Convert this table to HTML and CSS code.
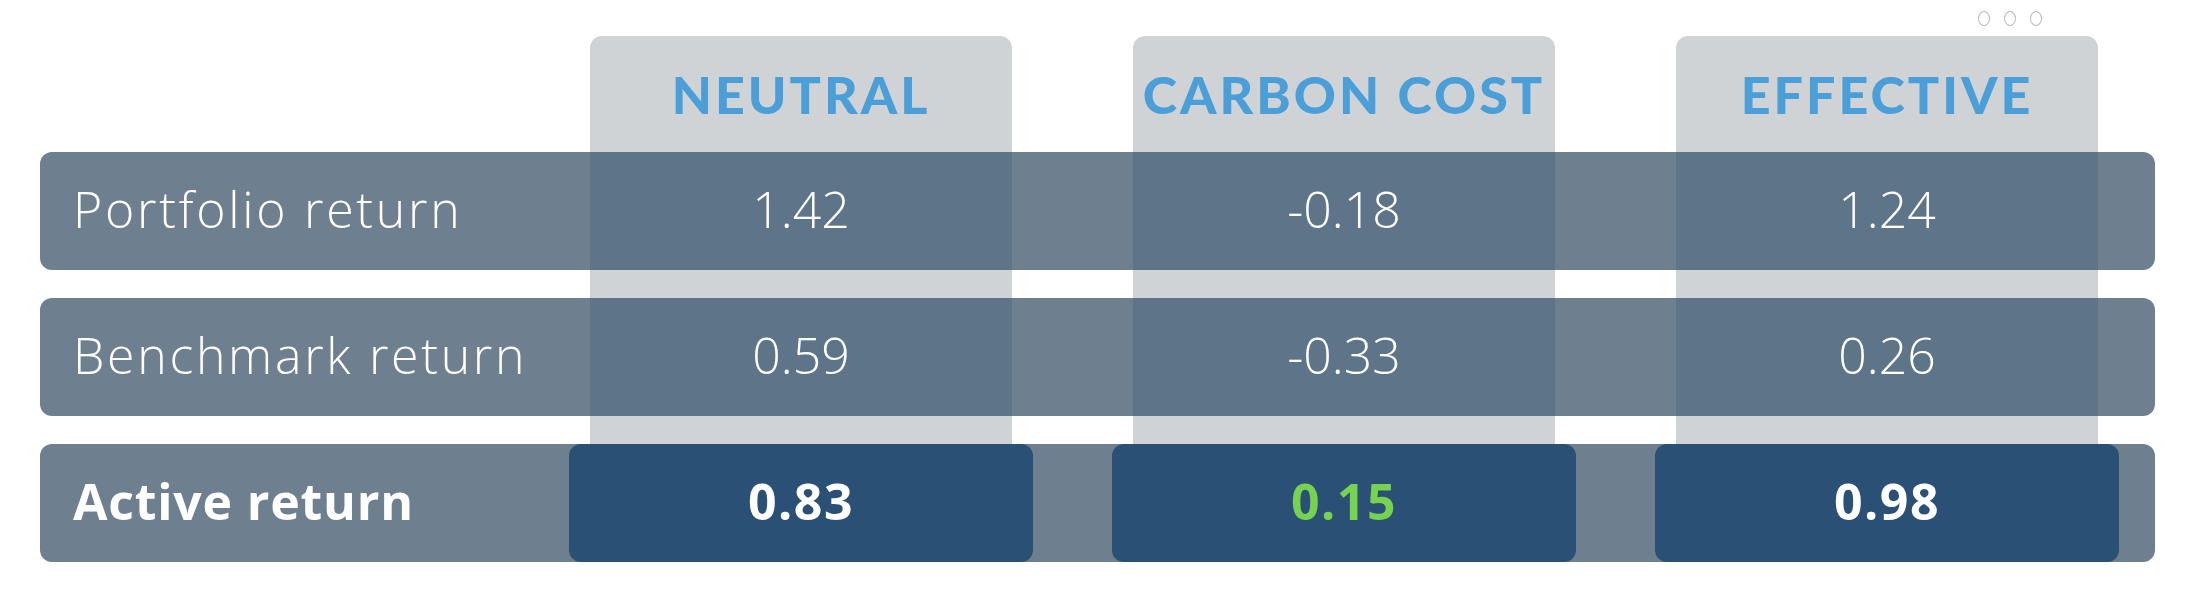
FILE: index.html
```html
<!DOCTYPE html>
<html lang="en">
  <head>
    <meta charset="UTF-8" />
    <meta name="viewport" content="width=device-width, initial-scale=1.0" />
    <title>Return attribution</title>
    <link rel="stylesheet" href="styles.css">
  </head>
  <body>
    <div class="toolbar">
      <span class="dot"></span>
      <span class="dot"></span>
      <span class="dot"></span>
    </div>

    <div class="table">
      <div class="col col-1"><h2>NEUTRAL</h2></div>
      <div class="col col-2"><h2>CARBON COST</h2></div>
      <div class="col col-3"><h2>EFFECTIVE</h2></div>

      <div class="row row-1">
        <span class="label">Portfolio return</span>
        <span class="cell c1">1.42</span>
        <span class="cell c2">-0.18</span>
        <span class="cell c3">1.24</span>
      </div>

      <div class="row row-2">
        <span class="label">Benchmark return</span>
        <span class="cell c1">0.59</span>
        <span class="cell c2">-0.33</span>
        <span class="cell c3">0.26</span>
      </div>

      <div class="row row-3 total">
        <span class="label">Active return</span>
        <span class="cell c1">0.83</span>
        <span class="cell c2 positive">0.15</span>
        <span class="cell c3">0.98</span>
      </div>
    </div>
  </body>
</html>
```

FILE: styles.css
```css
body {
  margin: 0;
  padding: 0 0 0 40px;
  font-family: "Open Sans", Lato, sans-serif;
  background: #fff;
}
.toolbar {
  height: 36px;
  display: flex;
  align-items: center;
  justify-content: flex-end;
  gap: 14px;
  padding-right: 156px;
}
.dot {
  width: 10px;
  height: 13px;
  border: 1px solid #b8b8b8;
  border-radius: 50%;
}
.table {
  --cols: 550px 422px 121px 422px 121px 422px 57px;
  display: grid;
  grid-template-columns: var(--cols);
  grid-template-rows: 116px 118px 28px 118px 28px 118px;
}
.col {
  grid-row: 1 / 7;
  background-color: #cfd3d6;
  border-radius: 12px;
}
.col-1,
.c1 {
  grid-column: 2;
}
.col-2,
.c2 {
  grid-column: 4;
}
.col-3,
.c3 {
  grid-column: 6;
}
.col h2 {
  margin: 0;
  height: 116px;
  display: flex;
  align-items: center;
  justify-content: center;
  color: #4a9fd9;
  font-family: Lato, sans-serif;
  font-size: 52px;
  font-weight: 900;
  letter-spacing: 3px;
}
.row {
  grid-column: 1 / -1;
  display: grid;
  grid-template-columns: var(--cols);
  background-color: #6e7f8f;
  border-radius: 12px;
  color: #fff;
  font-size: 50px;
  font-weight: 300;
}
.row-1 {
  grid-row: 2;
}
.row-2 {
  grid-row: 4;
}
.row-3 {
  grid-row: 6;
}
.label {
  grid-column: 1;
  align-self: center;
  padding: 0 0 4px 33px;
  letter-spacing: 2.7px;
}
.cell {
  display: flex;
  align-items: center;
  justify-content: center;
  padding-bottom: 4px;
  background-color: #5e7489;
}
.total {
  font-weight: 700;
}
.total .label {
  letter-spacing: 0.8px;
}
.total .cell {
  margin: 0 -21px;
  background-color: #2b5075;
  border-radius: 12px;
  letter-spacing: 1.5px;
}
.positive {
  color: #76d24f;
}
```
